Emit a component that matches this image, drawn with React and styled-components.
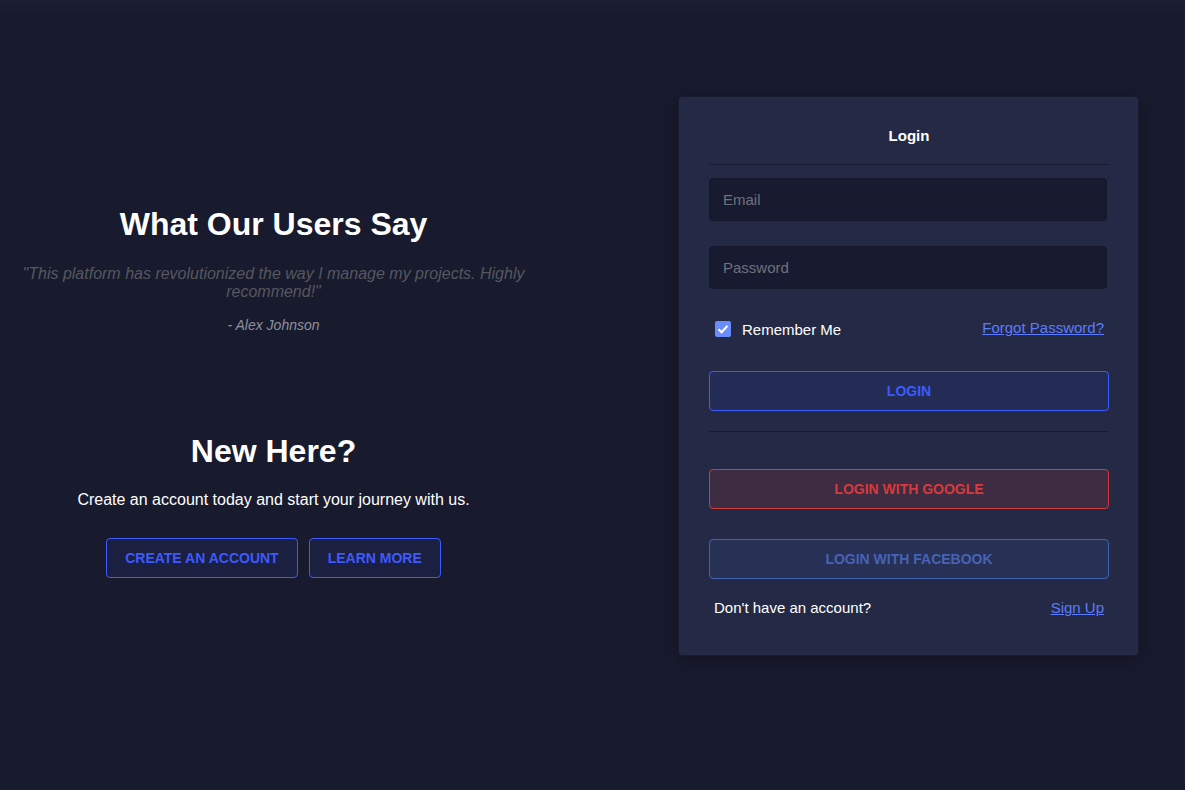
import React from 'react';
import styled, { createGlobalStyle } from 'styled-components';

const GlobalStyle = createGlobalStyle`
  html, body {
    margin: 0;
    padding: 0;
    background: #181a2e;
    font-family: "Liberation Sans", Arial, sans-serif;
  }
  * { box-sizing: border-box; }
`;

const Page = styled.div`
  min-height: 790px;
  display: flex;
  justify-content: space-between;
  align-items: flex-start;
  padding: 96px 46px 0 20px;
  background: linear-gradient(#1c1f33 0px, #181a2e 14px);
`;

const LeftColumn = styled.div`
  width: 507px;
  display: flex;
  flex-direction: column;
  align-items: center;
  text-align: center;
  padding-top: 108px;
`;

const Heading = styled.h2`
  margin: 0;
  font-size: 32px;
  line-height: 40px;
  font-weight: 700;
  color: #ffffff;
`;

const Quote = styled.p`
  margin: 21px 0 0;
  font-size: 16px;
  line-height: 18px;
  font-style: italic;
  color: #55585f;
`;

const Author = styled.p`
  margin: 16px 0 0;
  font-size: 14px;
  line-height: 16px;
  font-style: italic;
  color: #8e919c;
`;

const Section = styled.div`
  margin-top: ${(p) => p.$top || 0}px;
  display: flex;
  flex-direction: column;
  align-items: center;
`;

const Lead = styled.p`
  margin: 20px 0 0;
  font-size: 16px;
  line-height: 18px;
  color: #ffffff;
`;

const ButtonRow = styled.div`
  display: flex;
  gap: 11px;
  margin-top: 29px;
`;

const OutlineButton = styled.button`
  height: 40px;
  padding: 0 18px;
  border: 1px solid #3d5afe;
  border-radius: 4px;
  background: #1c2040;
  color: #3d5afe;
  font-family: inherit;
  font-size: 14px;
  font-weight: 700;
  text-transform: uppercase;
  cursor: pointer;
`;

const Card = styled.div`
  width: 461px;
  height: 560px;
  padding: 0 30px;
  background: #242a45;
  border: 1px solid #1a1d30;
  border-radius: 4px;
  box-shadow: 0 4px 18px rgba(0, 0, 0, 0.25);
  display: flex;
  flex-direction: column;
`;

const CardTitle = styled.div`
  height: 68px;
  display: flex;
  align-items: center;
  justify-content: center;
  padding-top: 10px;
  font-size: 15px;
  font-weight: 700;
  color: #ffffff;
  border-bottom: 1px solid #171a2c;
  margin-right: -1px;
`;

const Field = styled.input`
  width: 398px;
  height: 43px;
  margin-top: ${(p) => p.$top}px;
  padding: 0 13px;
  background: #181a2f;
  border: 1px solid #14172a;
  border-radius: 4px;
  color: #ffffff;
  font-family: inherit;
  font-size: 15px;
  outline: none;
  &::placeholder { color: #6f717c; }
`;

const OptionsRow = styled.div`
  display: flex;
  justify-content: space-between;
  align-items: center;
  margin-top: 28px;
  padding: 0 4px 0 6px;
  height: 24px;
`;

const CheckLabel = styled.label`
  display: flex;
  align-items: center;
  gap: 11px;
  font-size: 15px;
  color: #ffffff;
`;

const CheckBox = styled.span`
  width: 16px;
  height: 16px;
  border-radius: 2px;
  background: #6a8cff;
  display: flex;
  align-items: center;
  justify-content: center;
`;

const TextLink = styled.a`
  font-size: 15px;
  color: #5c7cff;
  text-decoration: underline;
  cursor: pointer;
  margin-top: ${(p) => (p.$up ? -4 : 0)}px;
`;

const WideButton = styled.button`
  width: 400px;
  height: 40px;
  margin-top: ${(p) => p.$top}px;
  border: 1px solid ${(p) => p.$border};
  border-radius: 4px;
  background: ${(p) => p.$bg};
  color: ${(p) => p.$color};
  font-family: inherit;
  font-size: 14px;
  font-weight: 700;
  text-transform: uppercase;
  cursor: pointer;
`;

const Divider = styled.div`
  width: 399px;
  margin-top: 20px;
  border-top: 1px solid #171a2c;
`;

const FooterRow = styled.div`
  display: flex;
  justify-content: space-between;
  align-items: center;
  margin-top: 20px;
  padding: 0 4px 0 5px;
  font-size: 15px;
  color: #ffffff;
`;

function App() {
  return (
    <>
      <GlobalStyle />
      <Page>
        <LeftColumn>
          <Heading>What Our Users Say</Heading>
          <Quote>
            "This platform has revolutionized the way I manage my projects. Highly recommend!"
          </Quote>
          <Author>- Alex Johnson</Author>
          <Section $top={98}>
            <Heading>New Here?</Heading>
            <Lead>Create an account today and start your journey with us.</Lead>
            <ButtonRow>
              <OutlineButton>Create an Account</OutlineButton>
              <OutlineButton>Learn More</OutlineButton>
            </ButtonRow>
          </Section>
        </LeftColumn>

        <Card>
          <CardTitle>Login</CardTitle>
          <Field $top={13} placeholder="Email" />
          <Field $top={25} type="password" placeholder="Password" />
          <OptionsRow>
            <CheckLabel>
              <CheckBox>
                <svg width="12" height="10" viewBox="0 0 12 10">
                  <path d="M1.5 5.2 L4.6 8.2 L10.5 1.8" fill="none" stroke="#ffffff" strokeWidth="2" />
                </svg>
              </CheckBox>
              Remember Me
            </CheckLabel>
            <TextLink $up>Forgot Password?</TextLink>
          </OptionsRow>
          <WideButton $top={30} $border="#3d5afe" $bg="#232c55" $color="#3d5afe">
            Login
          </WideButton>
          <Divider />
          <WideButton $top={37} $border="#d3383a" $bg="#3d2c42" $color="#d9393a">
            Login with Google
          </WideButton>
          <WideButton $top={30} $border="#4462b5" $bg="#273055" $color="#4763b6">
            Login with Facebook
          </WideButton>
          <FooterRow>
            <span>Don't have an account?</span>
            <TextLink>Sign Up</TextLink>
          </FooterRow>
        </Card>
      </Page>
    </>
  );
}

export default App;
